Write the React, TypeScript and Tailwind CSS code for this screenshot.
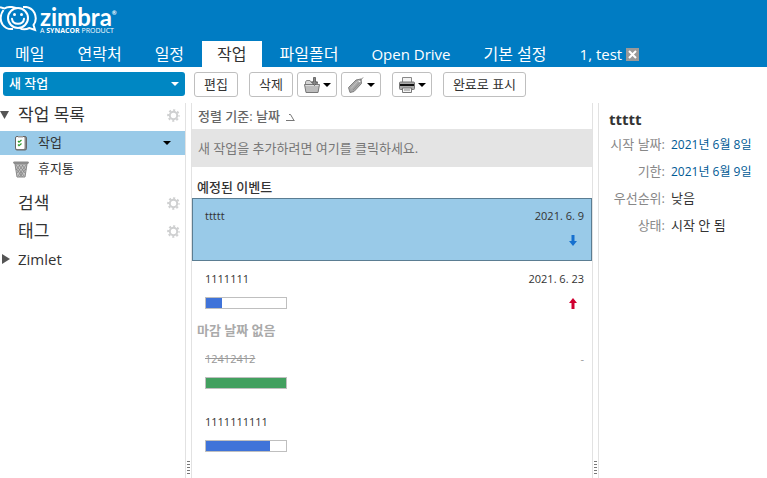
import { clsx } from "clsx";

const tabs = ["메일", "연락처", "일정", "작업", "파일폴더", "Open Drive", "기본 설정"];

const Caret = ({ className }: { className?: string }) => (
  <svg width="8" height="4" viewBox="0 0 8 4" className={clsx("shrink-0", className)} aria-hidden="true">
    <path d="M0 0h8L4 4z" fill="currentColor" />
  </svg>
);

const LogoMark = () => (
  <svg width="38" height="28" viewBox="0 0 38 28" fill="none" stroke="white" strokeWidth="2" aria-hidden="true">
    <path d="M0 1.200l4.500 1.300C6.500 1.200 9 .8 12 1c3 .3 5 1.300 7 3M3.500 4C.5 8-.5 14 2.500 18.500 5 22 9 23.500 13 23" />
    <path d="M23 1c5-.5 9.500 2 11.500 6 2 4.500 1.200 9-1 12l1.500 5-5.500-2c-3 1.500-7 1.800-10 0" />
    <circle cx="18" cy="12" r="10" fill="#007cc3" />
    <path d="M12 12.800c.8 6.500 11.200 6.500 12 0" strokeLinecap="round" />
    <circle cx="14.500" cy="8.500" r="1.500" fill="white" stroke="none" />
    <circle cx="21.500" cy="8.500" r="1.500" fill="white" stroke="none" />
  </svg>
);

const Gear = () => (
  <svg width="13" height="13" viewBox="0 0 14 14" fill="none" stroke="#cfd0d1" aria-hidden="true">
    <circle cx="7" cy="7" r="4" strokeWidth="2.200" />
    <circle cx="7" cy="7" r="5.800" strokeWidth="2" strokeDasharray="2.280 2.280" strokeDashoffset="1.140" />
  </svg>
);

const MoveIcon = () => (
  <svg width="18" height="18" viewBox="0 0 18 18" aria-hidden="true">
    <path d="M2.500 8V6l1-1.500H7L8 6h6.500v2" fill="#d5d5d5" stroke="#888" />
    <path d="M1.500 8.500h15l-1.500 8H3z" fill="#bdbdbd" stroke="#777" />
    <path d="M2.500 9.500h13" stroke="#ddd" />
    <path d="M10.500 1.500h2V6h2l-3 3.500-3-3.500h2z" fill="#888" stroke="#555" strokeWidth=".8" />
  </svg>
);

const TagIcon = () => (
  <svg width="18" height="18" viewBox="0 0 18 18" aria-hidden="true">
    <path d="M1.500 11.500L9 4l5-1 .5 4.500L7 15.500l-4 1z" fill="#a8a8a8" stroke="#808080" />
    <path d="M4 12.500l6.500-7" stroke="#c4c4c4" />
    <path d="M6 14l6.500-7" stroke="#8e8e8e" />
    <circle cx="12.500" cy="5" r="1" fill="white" />
    <path d="M12.500 5l3.500-3.500" stroke="#777" />
  </svg>
);

const PrintIcon = () => (
  <svg width="18" height="18" viewBox="0 0 18 18" aria-hidden="true">
    <path d="M4.500 7V1.500h9V7" fill="#f2f2f2" stroke="#888" />
    <rect x="1.500" y="6" width="15" height="7.500" rx="1" fill="#aaa" stroke="#777" />
    <path d="M2 9h14" stroke="#111" strokeWidth="2" />
    <path d="M4.500 12h9v4.500h-9z" fill="#f2f2f2" stroke="#777" />
    <path d="M6 14h6" stroke="#888" />
  </svg>
);

const TaskIcon = () => (
  <svg width="16" height="16" viewBox="0 0 16 16" aria-hidden="true">
    <rect x="2.500" y="1.500" width="11" height="13.500" rx="1.500" fill="#888" stroke="#666" />
    <rect x="3" y="2" width="8.500" height="12" rx="1" fill="white" />
    <path d="M5 1h5v1.500H5z" fill="#999" />
    <path d="M5 6l1 1.200L8.500 5M5 9.500l1 1.200 2.500-2.200" fill="none" stroke="#2c9a2c" strokeWidth="1.200" />
  </svg>
);

const TrashIcon = () => (
  <svg width="16" height="17" viewBox="0 0 16 17" aria-hidden="true">
    <path d="M2 3h12l-2 13H4z" fill="#c4c4c4" stroke="#888" />
    <path
      d="M3 4l8 11M6 4l6 8M9 4l4 5M3.500 8l6 8M13 4L5 15M10 4l-6 8M7 4L3 9M12.500 8l-6 8"
      stroke="#7d7d7d"
      strokeWidth=".7"
    />
    <path d="M0 1.500C0 .5 1 .5 2 .5h12c1 0 2 0 2 1L15 3H1z" fill="#8c8c8c" />
  </svg>
);

const Priority = ({ level }: { level: "low" | "high" }) => (
  <svg
    width="8"
    height="11"
    viewBox="0 0 8 11"
    className={level === "low" ? "text-[#1670cf]" : "rotate-180 text-[#d00030]"}
    aria-label={level}
  >
    <path d="M2.500 0h3v6H8L4 11 0 6h2.500z" fill="currentColor" />
  </svg>
);

const toolButton = "flex h-[25px] shrink-0 items-center justify-center rounded-[3px] border border-[#bfbfbf] bg-white text-[#333]";

type Task = {
  name: string;
  date?: string;
  progress?: number;
  priority?: "low" | "high";
  selected?: boolean;
  done?: boolean;
};

const upcoming: Task[] = [
  { name: "ttttt", date: "2021. 6. 9", priority: "low", selected: true },
  { name: "1111111", date: "2021. 6. 23", progress: 20, priority: "high" },
];

const undated: Task[] = [
  { name: "12412412", date: "-", progress: 100, done: true },
  { name: "1111111111", progress: 80 },
];

const TaskRow = ({ task }: { task: Task }) => (
  <li
    className={clsx(
      "h-[63px] border pt-[9px] pr-[7px] pl-3 text-[11px] leading-4",
      task.selected ? "border-[#5b7d92] bg-[#99cae8]" : "border-transparent",
      task.done ? "text-[#999]" : "text-[#333]"
    )}
  >
    <div className="flex justify-between">
      <span className={clsx(task.done && "line-through")}>{task.name}</span>
      <span>{task.date}</span>
    </div>
    <div className="mt-2 flex h-4 items-center justify-between pr-[7px]">
      {task.progress !== undefined ? (
        <div className="h-3 w-[82px] border border-[#bfbfbf] bg-white">
          <div
            className={clsx("h-full", task.progress === 100 ? "bg-[#42a05f]" : "bg-[#3f73d9]")}
            style={{ width: `${task.progress}%` }}
          />
        </div>
      ) : (
        <span />
      )}
      {task.priority && <Priority level={task.priority} />}
    </div>
  </li>
);

const Sash = () => (
  <div className="flex w-[7px] shrink-0 flex-col items-center justify-end gap-0.5 border-x border-[#e2e2e2] pb-1">
    {[0, 1, 2, 3, 4].map((n) => (
      <span key={n} className="h-px w-[3px] bg-[#777]" />
    ))}
  </div>
);

const groups = ["검색", "태그"];

const details = [
  { label: "시작 날짜:", value: "2021년 6월 8일", date: true },
  { label: "기한:", value: "2021년 6월 9일", date: true },
  { label: "우선순위:", value: "낮음" },
  { label: "상태:", value: "시작 안 됨" },
];

const App = () => {
  return (
    <div className="flex h-screen flex-col overflow-hidden bg-white font-['Open_Sans','Noto_Sans_CJK_KR',sans-serif] text-[13px] text-[#333]">
      <header className="shrink-0 bg-[#007cc3] text-white">
        <div className="flex h-[41px] items-start gap-0.5 pt-1.5">
          <LogoMark />
          <div>
            <div className="flex font-['Lato',sans-serif] text-2xl leading-[21px] font-bold">
              zimbra
              <span className="text-[6px] leading-[14px]">®</span>
            </div>
            <div className="text-[7px] leading-[7px]">
              A <b>SYNACOR</b> PRODUCT
            </div>
          </div>
        </div>
        <nav className="flex h-[26px] gap-[3px] text-base">
          {tabs.map((tab) => (
            <button
              key={tab}
              className={clsx(
                "shrink-0 px-[15px]",
                tab === "작업" && "bg-white text-[#333]",
                tab === "Open Drive" && "text-[15px]"
              )}
            >
              {tab}
            </button>
          ))}
          <button className="flex shrink-0 items-center gap-1 px-[15px] text-[15px]">
            1, test
            <svg width="13" height="13" viewBox="0 0 13 13" aria-hidden="true">
              <path d="M0 0h13v13H0z" fill="#999" />
              <path d="M3 3l7 7M10 3l-7 7" stroke="white" strokeWidth="2" />
            </svg>
          </button>
        </nav>
      </header>

      <div className="flex h-9 shrink-0 items-start pt-[5px] pl-[3px]">
        <button className="flex h-6 w-[182px] shrink-0 items-center justify-between rounded-[3px] bg-[#0087c3] px-1.5 font-medium text-white">
          새 작업
          <Caret />
        </button>
        <button className={clsx(toolButton, "ml-[9px] w-11")}>편집</button>
        <button className={clsx(toolButton, "ml-[11px] w-11")}>삭제</button>
        <button className={clsx(toolButton, "ml-1 w-10 gap-0.5")} aria-label="이동">
          <MoveIcon />
          <Caret className="text-black" />
        </button>
        <button className={clsx(toolButton, "ml-1 w-10 gap-0.5")} aria-label="태그">
          <TagIcon />
          <Caret className="text-black" />
        </button>
        <button className={clsx(toolButton, "ml-[11px] w-10 gap-0.5")} aria-label="인쇄">
          <PrintIcon />
          <Caret className="text-black" />
        </button>
        <button className={clsx(toolButton, "ml-[11px] w-[83px]")}>완료로 표시</button>
      </div>

      <div className="flex min-h-0 flex-1">
        <aside className="w-[185px] shrink-0">
          <div className="mb-1 flex h-6 items-center pr-[5px] text-[17px]">
            <svg width="18" height="8" viewBox="0 0 18 8" aria-hidden="true">
              <path d="M0 0h9L4.500 8z" fill="#555" />
            </svg>
            <span className="flex-1">작업 목록</span>
            <Gear />
          </div>
          <div className="flex h-6 items-center bg-[#99cae8] pr-[14px] pl-[13px]">
            <TaskIcon />
            <span className="ml-[9px] flex-1">작업</span>
            <Caret className="text-black" />
          </div>
          <div className="mb-1.5 flex h-7 items-center pl-[13px]">
            <TrashIcon />
            <span className="ml-[9px]">휴지통</span>
          </div>
          {groups.map((group) => (
            <div key={group} className="flex h-7 items-center pr-[5px] pl-[18px] text-[17px]">
              <span className="flex-1">{group}</span>
              <Gear />
            </div>
          ))}
          <div className="flex h-7 items-center text-[15px]">
            <svg width="18" height="10" viewBox="0 0 18 10" aria-hidden="true">
              <path d="M2 0l8 5-8 5z" fill="#555" />
            </svg>
            Zimlet
          </div>
        </aside>

        <Sash />

        <main className="min-w-0 flex-1">
          <button className="flex h-[26px] items-center gap-1.5 pt-0.5 pl-1.5 font-medium text-[#666]">
            정렬 기준: 날짜
            <svg width="9" height="7" viewBox="0 0 9 7" fill="none" stroke="#777" aria-hidden="true">
              <path d="M0 6.500h8.500M3 .5h1.500l3.500 6" />
            </svg>
          </button>
          <input
            aria-label="새 작업"
            placeholder="새 작업을 추가하려면 여기를 클릭하세요."
            className="block h-[38px] w-full bg-[#e4e4e4] px-1.5 placeholder:text-[#777]"
          />
          <h2 className="mt-[14px] h-[17px] pl-[5px] leading-3 font-medium">예정된 이벤트</h2>
          <ul>
            {upcoming.map((task) => (
              <TaskRow key={task.name} task={task} />
            ))}
          </ul>
          <h2 className="h-[17px] pl-[5px] leading-3 font-bold text-[#aaa]">마감 날짜 없음</h2>
          <ul>
            {undated.map((task) => (
              <TaskRow key={task.name} task={task} />
            ))}
          </ul>
        </main>

        <Sash />

        <section className="w-[168px] shrink-0 pt-1 pl-2.5">
          <h1 className="h-6 text-[15px] leading-6 font-bold">ttttt</h1>
          <dl className="grid grid-cols-[56px_1fr] gap-x-1.5 leading-[27px]">
            {details.map((item) => (
              <div key={item.label} className="contents">
                <dt className="text-right whitespace-nowrap text-[#888]">{item.label}</dt>
                <dd className={clsx("whitespace-nowrap", item.date && "text-xs leading-[27px] text-[#005a95]")}>
                  {item.value}
                </dd>
              </div>
            ))}
          </dl>
        </section>
      </div>
    </div>
  );
};

export default App;
